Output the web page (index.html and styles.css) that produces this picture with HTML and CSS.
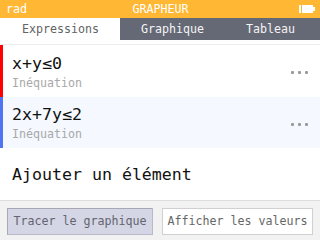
FILE: index.html
```html
<!DOCTYPE html>
<html>
<head>
<meta charset="utf-8">
<link rel="stylesheet" href="styles.css">
</head>
<body>
<div class="screen">
  <div class="header">
    <span class="angle">rad</span>
    <span class="title">GRAPHEUR</span>
    <svg class="battery" width="16" height="8" viewBox="0 0 16 8">
      <rect x="0" y="0" width="2" height="8" fill="#fff"/>
      <rect x="3" y="0" width="11" height="8" fill="#fff"/>
      <rect x="14" y="2" width="2" height="4" fill="#fff"/>
    </svg>
  </div>
  <div class="tabs">
    <div class="tab active">Expressions</div>
    <div class="tab">Graphique</div>
    <div class="tab">Tableau</div>
  </div>
  <div class="list">
    <div class="row">
      <div class="bar red"></div>
      <div class="cell">
        <div class="expr">x+y≤0</div>
        <div class="sub">Inéquation</div>
      </div>
      <div class="dots"><i></i><i></i><i></i></div>
    </div>
    <div class="row alt">
      <div class="bar blue"></div>
      <div class="cell">
        <div class="expr">2x+7y≤2</div>
        <div class="sub">Inéquation</div>
      </div>
      <div class="dots"><i></i><i></i><i></i></div>
    </div>
    <div class="row add">
      <div class="expr">Ajouter un élément</div>
    </div>
  </div>
  <div class="footer">
    <div class="btn plot">Tracer le graphique</div>
    <div class="btn values">Afficher les valeurs</div>
  </div>
</div>
</body>
</html>
```
FILE: styles.css
```css
* { box-sizing: border-box; margin: 0; padding: 0; }
html, body { width: 320px; height: 240px; overflow: hidden; background: #fff; }
body { font-family: "DejaVu Sans Mono", "Liberation Mono", monospace; }
.screen { width: 320px; height: 240px; display: flex; flex-direction: column; }

.header {
  height: 18px; background: #FFB734; color: #fff;
  display: flex; align-items: center; justify-content: space-between;
  padding: 0 5px 0 6px; font-size: 11.65px; line-height: 18px;
}
.angle { width: 40px; }
.title { flex: 1; text-align: center; }
.header svg { width: 16px; margin-left: 24px; }

.tabs { height: 22px; background: #656975; display: flex; font-size: 11.65px; line-height: 22px; }
.tab { color: #f4f4f6; padding: 0 21px; }
.tab.active { background: #fff; color: #636363; width: 120px; padding: 0 0 0 22px; }
.tab:nth-child(2) { width: 105px; }

.list { margin-top: 4px; border-top: 1px solid #eeeeee; display: flex; flex-direction: column; }
.row { height: 52px; display: flex; align-items: stretch; background: #fff; }
.row.alt { background: #F5F8FE; height: 51px; }
.bar { width: 3px; }
.bar.red { background: #FF0000; }
.bar.blue { background: #5075F2; }
.cell { flex: 1; padding: 10px 0 0 9px; }
.expr { font-size: 16.6px; line-height: 18px; color: #111; }
.sub { font-size: 11.65px; line-height: 14px; color: #a8a8a8; margin-top: 3px; }
.alt .cell { padding-top: 9px; }
.dots { display: flex; align-items: center; gap: 4px; padding: 2px 12px 0 0; }
.alt .dots { padding-top: 4px; }
.dots i { width: 3px; height: 3px; background: #9a9a9a; border-radius: 1px; display: block; }

.row.add { height: 52px; align-items: center; padding: 2px 0 0 12px; }

.footer {
  flex: 1; background: #F2F2F2; border-top: 1px solid #DEDEDE;
  display: flex; gap: 9px; padding: 7px 7px 0 7px; align-items: flex-start;
}
.btn { height: 27px; font-size: 11.65px; line-height: 25px; text-align: center; }
.btn.plot { width: 146px; background: #D5D6E5; color: #62646f; border: 1px solid #b8b9c8; border-top-color: #a8a8b4; border-left-color: #a8a8b4; }
.btn.values { width: 151px; background: #fff; color: #666; border: 1px solid #d0d0d0; }
```
